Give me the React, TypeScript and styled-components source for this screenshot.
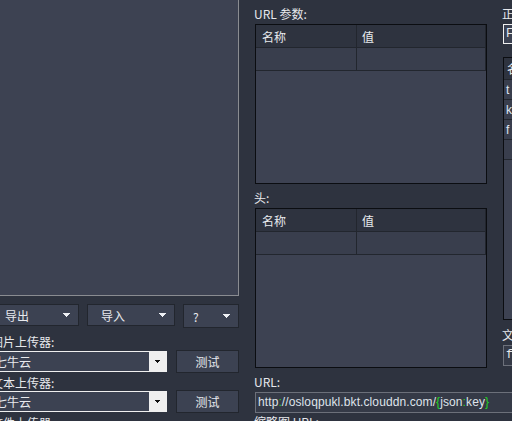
import React from "react";
import styled, { createGlobalStyle } from "styled-components";

const GlobalStyle = createGlobalStyle`
  html, body { margin: 0; padding: 0; background: #2e333f; }
  body { font-family: "Noto Sans CJK SC", "Noto Sans", sans-serif; }
`;

const Frame = styled.div`
  width: 512px;
  height: 421px;
  overflow: hidden;
  background: #2e333f;
  color: #e4e6ea;
  font-size: 12px;
`;

const Stage = styled.div`
  display: flex;
  gap: 15px;
  margin-left: -9px;
  align-items: flex-start;
`;

const Column = styled.div<{ $w: number }>`
  flex: none;
  width: ${(p) => p.$w}px;
  display: flex;
  flex-direction: column;
  align-items: flex-start;
`;

const Panel = styled.div`
  box-sizing: border-box;
  width: 248px;
  height: 296px;
  background: #3d4252;
  border-right: 1px solid #8a8c91;
  border-bottom: 1px solid #8a8c91;
`;

const Label = styled.div<{ $top: number }>`
  margin-top: ${(p) => p.$top}px;
  height: 14px;
  line-height: 14px;
  font-size: 12px;
  white-space: nowrap;
  color: #e6e8ec;
`;

const ButtonRow = styled.div`
  display: flex;
  gap: 8px;
  margin-top: 8px;
  align-items: flex-start;
`;

const MenuButton = styled.div<{ $w: number; $h: number; $pad: number }>`
  box-sizing: border-box;
  width: ${(p) => p.$w}px;
  height: ${(p) => p.$h}px;
  padding: 0 8px 0 ${(p) => p.$pad}px;
  display: flex;
  align-items: center;
  justify-content: space-between;
  background: #3c4252;
  border: 1px solid #22262e;
  color: #e8eaee;
  font-size: 12px;
`;

const PixelSvg = styled.svg`
  display: block;
  flex: none;
  shape-rendering: crispEdges;
`;

const Caret = ({ color, small }: { color: string; small?: boolean }) =>
  small ? (
    <PixelSvg width="5" height="3" viewBox="0 0 5 3">
      <path d="M0 0h5v1H0z M1 1h3v1H1z M2 2h1v1H2z" fill={color} />
    </PixelSvg>
  ) : (
    <PixelSvg width="7" height="4" viewBox="0 0 7 4">
      <path d="M0 0h7v1H0z M1 1h5v1H1z M2 2h3v1H2z M3 3h1v1H3z" fill={color} />
    </PixelSvg>
  );

const UploaderRow = styled.div<{ $top: number }>`
  margin-top: ${(p) => p.$top}px;
  display: flex;
  align-items: center;
  gap: 9px;
`;

const Combo = styled.div`
  box-sizing: border-box;
  width: 176px;
  height: 21px;
  display: flex;
  border: 1px solid #f0f0f0;
  background: #3c4252;
`;

const ComboText = styled.div`
  flex: 1;
  padding-left: 3px;
  line-height: 19px;
  color: #e8eaee;
  font-size: 12px;
`;

const ComboArrow = styled.div`
  width: 17px;
  background: #efefef;
  display: flex;
  align-items: center;
  justify-content: center;
`;

const TestButton = styled.div`
  box-sizing: border-box;
  width: 63px;
  height: 23px;
  display: flex;
  align-items: center;
  justify-content: center;
  background: #3c4252;
  border: 1px solid #22262e;
  color: #e8eaee;
  font-size: 12px;
`;

const Table = styled.div<{ $w: number; $h: number; $cols: string; $rows: string }>`
  box-sizing: border-box;
  width: ${(p) => p.$w}px;
  height: ${(p) => p.$h}px;
  margin-top: 3px;
  margin-left: 1px;
  border: 1px solid #0b0d11;
  background: #3d4252;
  display: grid;
  grid-template-columns: ${(p) => p.$cols};
  grid-template-rows: ${(p) => p.$rows};
  align-content: start;
`;

const HeadCell = styled.div<{ $pad: number }>`
  background: #2e333f;
  border-right: 1px solid #22262e;
  border-bottom: 1px solid #22262e;
  padding-left: ${(p) => p.$pad}px;
  display: flex;
  align-items: center;
  color: #e8eaee;
  font-size: 12px;
  white-space: nowrap;
  overflow: hidden;
`;

const BodyCell = styled.div`
  background: #393e4d;
  border-right: 1px solid #22262e;
  border-bottom: 1px solid #22262e;
  padding-left: 2px;
  display: flex;
  align-items: center;
  font-family: "Liberation Sans", Arial, sans-serif;
  font-size: 12px;
  color: #dfe6f2;
  white-space: nowrap;
  overflow: hidden;
`;

const UrlBox = styled.div`
  box-sizing: border-box;
  margin-top: 3px;
  margin-left: 1px;
  width: 320px;
  height: 21px;
  padding-left: 2px;
  border: 1px solid #6c707a;
  background: #353a47;
  font-family: "Liberation Sans", Arial, sans-serif;
  font-size: 12px;
  letter-spacing: 0.1px;
  line-height: 19px;
  color: #dfe3ea;
  white-space: nowrap;
`;

const Token = styled.span<{ $accent?: boolean }>`
  color: ${(p) => (p.$accent ? "#22d322" : "#dfe3ea")};
`;

const TextField = styled.div<{ $top: number; $light?: boolean }>`
  box-sizing: border-box;
  margin-top: ${(p) => p.$top}px;
  margin-left: 1px;
  width: 240px;
  height: ${(p) => (p.$light ? 20 : 21)}px;
  padding-left: 2px;
  border: 1px solid ${(p) => (p.$light ? "#f0f0f0" : "#6c707a")};
  background: ${(p) => (p.$light ? "#3c4252" : "#353a47")};
  font-family: "Liberation Mono", "Noto Sans CJK SC", monospace;
  font-size: 12px;
  line-height: ${(p) => (p.$light ? 18 : 19)}px;
  color: #e8eaee;
  white-space: nowrap;
`;

const ListBox = styled(Table)`
  margin-top: 13px;
`;

export default function App() {
  return (
    <>
      <GlobalStyle />
      <Frame>
        <Stage>
          <Column $w={248}>
            <Panel />
            <ButtonRow>
              <MenuButton $w={88} $h={22} $pad={13}>
                导出
                <Caret color="#eef0f4" />
              </MenuButton>
              <MenuButton $w={88} $h={22} $pad={13}>
                导入
                <Caret color="#eef0f4" />
              </MenuButton>
              <MenuButton $w={56} $h={24} $pad={9}>
                ?
                <Caret color="#eef0f4" />
              </MenuButton>
            </ButtonRow>
            <Label $top={7}>图片上传器:</Label>
            <UploaderRow $top={1}>
              <Combo>
                <ComboText>七牛云</ComboText>
                <ComboArrow>
                  <Caret color="#111" small />
                </ComboArrow>
              </Combo>
              <TestButton>测试</TestButton>
            </UploaderRow>
            <Label $top={3}>文本上传器:</Label>
            <UploaderRow $top={0}>
              <Combo>
                <ComboText>七牛云</ComboText>
                <ComboArrow>
                  <Caret color="#111" small />
                </ComboArrow>
              </Combo>
              <TestButton>测试</TestButton>
            </UploaderRow>
            <Label $top={3}>文件上传器:</Label>
          </Column>

          <Column $w={233}>
            <Label $top={7}>URL 参数:</Label>
            <Table $w={232} $h={160} $cols="101px 129px" $rows="23px 23px">
              <HeadCell $pad={6}>名称</HeadCell>
              <HeadCell $pad={5}>值</HeadCell>
              <BodyCell />
              <BodyCell />
            </Table>
            <Label $top={7}>头:</Label>
            <Table $w={232} $h={160} $cols="101px 129px" $rows="23px 23px">
              <HeadCell $pad={6}>名称</HeadCell>
              <HeadCell $pad={5}>值</HeadCell>
              <BodyCell />
              <BodyCell />
            </Table>
            <Label $top={7}>URL:</Label>
            <UrlBox>
              <Token>http</Token>
              <Token $accent>:</Token>
              <Token>//osloqpukl.bkt.clouddn.com/</Token>
              <Token $accent>{"{"}</Token>
              <Token>json</Token>
              <Token $accent>:</Token>
              <Token>key</Token>
              <Token $accent>{"}"}</Token>
            </UrlBox>
            <Label $top={2}>缩略图 URL:</Label>
          </Column>

          <Column $w={120}>
            <Label $top={7}>正文:</Label>
            <TextField $top={3} $light>
              F
            </TextField>
            <ListBox $w={240} $h={263} $cols="100px 138px" $rows="22px 20px 20px 20px 20px">
              <HeadCell $pad={3}>名称</HeadCell>
              <HeadCell $pad={5}>值</HeadCell>
              <BodyCell>t</BodyCell>
              <BodyCell />
              <BodyCell>k</BodyCell>
              <BodyCell />
              <BodyCell>f</BodyCell>
              <BodyCell />
              <BodyCell />
              <BodyCell />
            </ListBox>
            <Label $top={8}>文件表单名称:</Label>
            <TextField $top={3}>f</TextField>
          </Column>
        </Stage>
      </Frame>
    </>
  );
}
